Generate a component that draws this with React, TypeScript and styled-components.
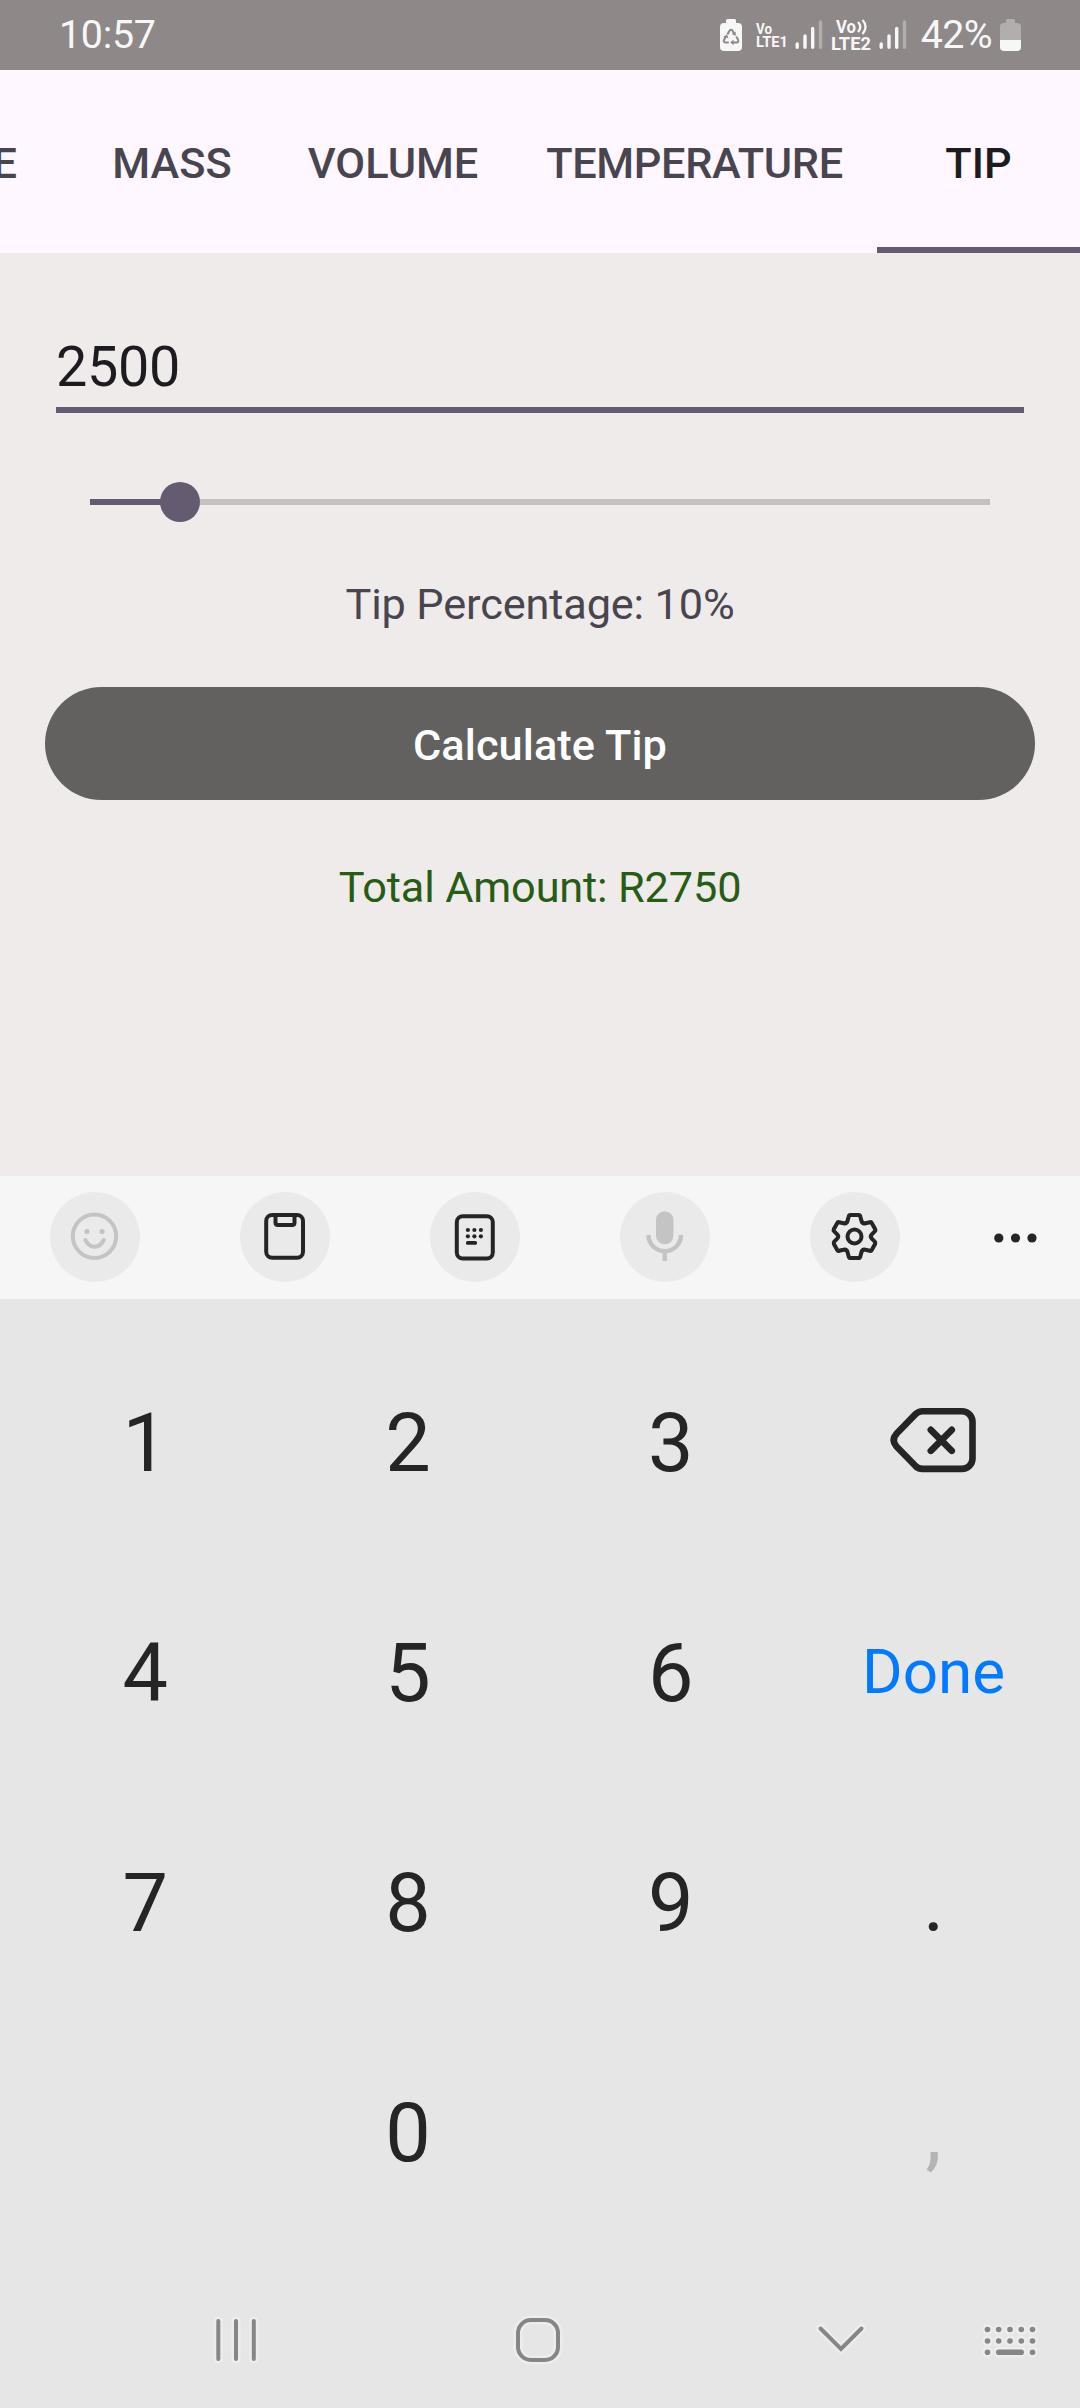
import React, { useState } from "react";
import styled, { createGlobalStyle } from "styled-components";

const GlobalStyle = createGlobalStyle`
  * { box-sizing: border-box; }
  body { margin: 0; background: #efebea; font-family: Roboto, "Noto Sans", sans-serif; }
  button { border: 0; padding: 0; background: none; font-family: inherit; }
  svg { display: block; overflow: visible; }
`;

const Screen = styled.div`
  width: 1080px;
  height: 2408px;
  display: flex;
  flex-direction: column;
  overflow: hidden;
  background: #efebea;
`;

const StatusBar = styled.header`
  height: 70px;
  flex: none;
  display: flex;
  align-items: center;
  justify-content: space-between;
  padding: 0 59px 0 59px;
  background: #8e8889;
  color: #f7f7f7;
`;

const Clock = styled.span`
  font-size: 39.4px;
  line-height: 46px;
  letter-spacing: -0.3px;
`;

const StatusIcons = styled.div`
  display: flex;
  align-items: center;
`;

const BatteryText = styled.span`
  font-size: 39.4px;
  line-height: 46px;
  letter-spacing: -0.6px;
  margin-left: 14px;
  margin-right: 8px;
`;

const Tabs = styled.nav`
  height: 183px;
  flex: none;
  display: flex;
  overflow: hidden;
  background: #fef7ff;
`;

const Tab = styled.button<{ $width: number; $active?: boolean; $spacing?: number }>`
  width: ${(p) => p.$width}px;
  flex: none;
  display: flex;
  justify-content: center;
  align-items: center;
  padding-top: ${(p) => (p.$active ? 9 : 3)}px;
  border-bottom: ${(p) => (p.$active ? "6px solid #645b70" : "0")};
  font-size: 43.3px;
  font-weight: 500;
  letter-spacing: ${(p) => p.$spacing ?? 0}px;
  white-space: nowrap;
  color: ${(p) => (p.$active ? "#1d1b20" : "#49454f")};
`;

const ClippedTab = styled(Tab)`
  justify-content: flex-end;
  padding-right: 57px;
  margin-left: -166px;
`;

const WideTab = styled(Tab)`
  padding-right: 4px;
`;

const Content = styled.main`
  height: 923px;
  flex: none;
  display: flex;
  flex-direction: column;
  align-items: center;
  padding: 76px 45px 0;
`;

const AmountInput = styled.input`
  width: 968px;
  height: 84px;
  border: 0;
  border-bottom: 6px solid #645b70;
  outline: 0;
  padding: 0 0 2px;
  background: transparent;
  color: #1d1b20;
  font: 400 55.7px Roboto, sans-serif;
  letter-spacing: -0.3px;
`;

const Slider = styled.div`
  width: 900px;
  height: 40px;
  margin-top: 69px;
  display: flex;
  align-items: center;
`;

const Track = styled.div<{ $filled?: boolean }>`
  height: 6px;
  background: ${(p) => (p.$filled ? "#645b70" : "#c6c1c1")};
  flex: ${(p) => (p.$filled ? "none" : "1")};
`;

const Thumb = styled.div`
  width: 40px;
  height: 40px;
  margin: 0 -20px;
  border-radius: 50%;
  background: #645b70;
  z-index: 1;
`;

const Line = styled.p<{ $color: string; $top: number }>`
  margin: ${(p) => p.$top}px 0 0;
  font-size: 43.3px;
  line-height: 52px;
  letter-spacing: -0.15px;
  color: ${(p) => p.$color};
`;

const CalculateButton = styled.button`
  width: 990px;
  height: 113px;
  margin-top: 56px;
  padding-top: 4px;
  border-radius: 57px;
  background: #62615f;
  color: #fff;
  font-size: 43.3px;
  font-weight: 500;
  letter-spacing: 0.1px;
`;

const Toolbar = styled.div`
  height: 123px;
  flex: none;
  display: flex;
  align-items: center;
  gap: 100px;
  padding: 0 0 1px 50px;
  background: #f6f6f6;
`;

const ToolButton = styled.button<{ $muted?: boolean }>`
  width: 90px;
  height: 90px;
  flex: none;
  border-radius: 50%;
  background: #eaeaea;
  color: ${(p) => (p.$muted ? "#c4c4c4" : "#252525")};
`;

const MoreButton = styled.button`
  width: 44px;
  height: 90px;
  margin-left: -6.5px;
  color: #252525;
`;

const Keypad = styled.div`
  height: 956px;
  flex: none;
  display: grid;
  grid-template-columns: repeat(4, 262.8px);
  grid-template-rows: repeat(4, 230px);
  padding: 27px 0 0 13.8px;
  background: #e6e6e6;
`;

const Key = styled.button<{ $tone?: "digit" | "action" | "muted" }>`
  display: flex;
  align-items: center;
  justify-content: center;
  padding-top: ${(p) => (p.$tone === "action" ? 0 : 4)}px;
  font-size: ${(p) => (p.$tone === "action" ? 62 : 81)}px;
  color: ${(p) => (p.$tone === "action" ? "#007aff" : p.$tone === "muted" ? "#b4b4b4" : "#252525")};
`;

const BackspaceGlyph = styled.svg`
  margin-bottom: 6px;
`;

const NavBar = styled.footer`
  flex: 1;
  display: flex;
  padding-top: 25px;
  background: #e6e6e6;
`;

const RecycleBattery = () => (
  <svg width="22" height="32" viewBox="0 0 22 32">
    <path fill="#f7f7f7" d="M6 1.5Q6 0 7.5 0h7Q16 0 16 1.5V4h2q4 0 4 4v20q0 4-4 4H4q-4 0-4-4V8q0-4 4-4h2z" />
    <g fill="none" stroke="#8e8889" strokeWidth="2">
      <path d="M7.4 15.4 9.5 11.7q1.5-2 3 0l1.8 3.2" />
      <path d="m16.3 17.5 1.7 3.1q1 2.8-1.5 2.9H12" />
      <path d="M8.8 23.5H5.5q-2.6-.4-1.4-2.8l1.5-3" />
    </g>
    <path fill="#8e8889" d="M15.7 12.5v4.6l-4-2zM13.5 20.6v5.6l-3.2-2.8zM3.4 17.4l3.7-1.8 1.4 3.8z" />
  </svg>
);

const VoLte = ({ sim }: { sim: 1 | 2 }) =>
  sim === 1 ? (
    <svg width="33" height="32" viewBox="0 0 33 32" fill="#f7f7f7" fontFamily="Roboto" fontWeight="700">
      <text x="0" y="14.5" fontSize="15" textLength="16" lengthAdjust="spacingAndGlyphs">Vo</text>
      <text x="0" y="28" fontSize="15.5" textLength="32" lengthAdjust="spacingAndGlyphs">LTE1</text>
    </svg>
  ) : (
    <svg width="42" height="32" viewBox="0 0 42 32" fill="#f7f7f7" fontFamily="Roboto" fontWeight="700">
      <text x="5" y="14" fontSize="18" textLength="20" lengthAdjust="spacingAndGlyphs">Vo</text>
      <path d="M27 3q4.5 4.5 0 10M31.5 1q6 6.5 0 14" fill="none" stroke="#f7f7f7" strokeWidth="2.3" />
      <text x="0" y="31" fontSize="18.5" textLength="40" lengthAdjust="spacingAndGlyphs">LTE2</text>
    </svg>
  );

const Signal = () => (
  <svg width="28" height="32" viewBox="0 0 28 32" strokeWidth="3.4" strokeLinecap="round" stroke="#f7f7f7">
    <path d="M2.2 25v3.3M10 17v11.3M17.7 9.5v18.8" />
    <path d="M25.5 3v25.3" stroke="#b2aeae" />
  </svg>
);

const Battery = () => (
  <svg width="21" height="32" viewBox="0 0 21 32">
    <path fill="#b2aeae" d="M6 1.5Q6 0 7.5 0h6Q15 0 15 1.5V4h2q4 0 4 4v13H0V8q0-4 4-4h2z" />
    <path fill="#f7f7f7" d="M0 21h21v7q0 4-4 4H4q-4 0-4-4z" />
  </svg>
);

const Gap = styled.span<{ $w: number }>`
  width: ${(p) => p.$w}px;
`;

const SmileIcon = () => (
  <svg width="90" height="90" viewBox="0 0 90 90" fill="none" stroke="currentColor" strokeWidth="4">
    <circle cx="44.5" cy="44.3" r="21.7" />
    <path d="M35.3 48q3.5 6.7 9.3 6.7T53.8 48" strokeLinecap="round" />
    <circle cx="37" cy="39.5" r="2.6" fill="currentColor" stroke="none" />
    <circle cx="52" cy="39.5" r="2.6" fill="currentColor" stroke="none" />
  </svg>
);

const ClipboardIcon = () => (
  <svg width="90" height="90" viewBox="0 0 90 90" fill="none" stroke="currentColor" strokeWidth="4">
    <rect x="26.2" y="23" width="36.8" height="42.8" rx="6" />
    <path d="M35.5 23v7.500q0 2.500 2.500 2.500h14q2.500 0 2.500-2.500V23" />
  </svg>
);

const PadIcon = () => (
  <svg width="90" height="90" viewBox="0 0 90 90" fill="currentColor">
    <rect x="26.8" y="24.2" width="36" height="42.4" rx="6" fill="none" stroke="currentColor" strokeWidth="4" />
    {[38, 44.3].map((y) => [37.9, 44.4, 50.9].map((x) => <circle key={`${x}-${y}`} cx={x} cy={y} r="2.1" />))}
    <rect x="36" y="49" width="11" height="3.8" rx="1.6" />
  </svg>
);

const MicIcon = () => (
  <svg width="90" height="90" viewBox="0 0 90 90">
    <rect x="36" y="19.3" width="17.5" height="33" rx="8.75" fill="currentColor" />
    <path d="M28.5 43a16.2 16.2 0 0 0 32.5 0M44.7 59v10" fill="none" stroke="currentColor" strokeWidth="4.4" />
  </svg>
);

const GearIcon = () => (
  <svg width="90" height="90" viewBox="0 0 90 90" fill="none" stroke="currentColor" strokeWidth="4" strokeLinejoin="round">
    <path d="M40.5 23h8q1.5 0 1.8 1.5l1.2 4.5q1 3 4 2.200l4.200-1q1.500-.4 2.200 1l3.300 6q.6 1.200-.4 2.200l-3 3q-2 2.100 0 4.200l3 3q1 1 .4 2.200l-3.300 6q-.7 1.400-2.200 1l-4.200-1q-3-.8-4 2.200l-1.200 4.500q-.3 1.500-1.800 1.500h-8q-1.500 0-1.800-1.500L37.500 60q-1-3-4-2.200l-4.200 1q-1.500.4-2.200-1l-3.300-6q-.6-1.200.4-2.200l3-3q2-2.100 0-4.200l-3-3q-1-1-.4-2.200l3.300-6q.7-1.400 2.200-1l4.200 1q3 .8 4-2.200l1.200-4.500Q39 23 40.500 23z" />
    <circle cx="44.5" cy="44.5" r="7" />
  </svg>
);

const MoreIcon = () => (
  <svg width="44" height="90" viewBox="0 0 44 90" fill="currentColor">
    <circle cx="4.8" cy="46" r="4.6" />
    <circle cx="21.5" cy="46" r="4.6" />
    <circle cx="38" cy="46" r="4.6" />
  </svg>
);

const BackspaceIcon = () => (
  <BackspaceGlyph width="88" height="68" viewBox="0 0 88 68" fill="none" stroke="currentColor" strokeWidth="6.6">
    <path d="M32.5 5.3H72A10.5 10.5 0 0 1 82.5 15.8V52.4A10.5 10.5 0 0 1 72 62.9H32.5Q28 62.9 25.5 60L6.5 40.5Q.8 34.1 6.5 27.7L25.5 8.2Q28.5 5.3 32.5 5.3z" />
    <path d="m40.8 23.8 21 21m0-21-21 21" strokeLinecap="round" />
  </BackspaceGlyph>
);

const NavIcons = () => (
  <svg width="1080" height="128" viewBox="0 0 1080 128" fill="none" strokeLinecap="round">
    {[
      { color: "#ededed", extra: 5 },
      { color: "#868686", extra: 0 },
    ].map(({ color, extra }) => (
      <g key={color} stroke={color}>
        <path d="M218.3 41v38M236 41v38M253.8 41v38" strokeWidth={4 + extra} />
        <rect x="518" y="40" width="40" height="40" rx="13" strokeWidth={4 + extra} />
        <path d="m820.5 48.5 20.5 20.5 20.5-20.5" strokeWidth={4 + extra} />
        {[49.5, 61, 72.3].map((y, row) =>
          [987.5, 998.7, 1010, 1021.3, 1032.5]
            .filter((_, i) => row < 2 || i === 0 || i === 4)
            .map((x) => <circle key={`${x}-${y}`} cx={x} cy={y} r={2.8 + extra / 2} fill={color} stroke="none" />)
        )}
        <path d="M998.8 72.3h22.4" strokeWidth={5.6 + extra} />
      </g>
    ))}
  </svg>
);

export default function App() {
  const [amount, setAmount] = useState("2500");
  const percent = 10;
  const keys = ["1", "2", "3", "back", "4", "5", "6", "Done", "7", "8", "9", ".", "", "0", "", ","];

  return (
    <>
      <GlobalStyle />
      <Screen>
        <StatusBar>
          <Clock>10:57</Clock>
          <StatusIcons>
            <RecycleBattery />
            <Gap $w={14} />
            <VoLte sim={1} />
            <Gap $w={6.5} />
            <Signal />
            <Gap $w={8} />
            <VoLte sim={2} />
            <Gap $w={5.5} />
            <Signal />
            <BatteryText>42%</BatteryText>
            <Battery />
          </StatusIcons>
        </StatusBar>
        <Tabs>
          <ClippedTab $width={240}>DISTANCE</ClippedTab>
          <Tab $width={196}>MASS</Tab>
          <Tab $width={246}>VOLUME</Tab>
          <WideTab $width={361} $spacing={-0.35}>TEMPERATURE</WideTab>
          <Tab $width={203} $active>TIP</Tab>
        </Tabs>
        <Content>
          <AmountInput value={amount} onChange={(e) => setAmount(e.target.value)} />
          <Slider>
            <Track $filled style={{ width: `${percent}%` }} />
            <Thumb />
            <Track />
          </Slider>
          <Line $color="#49454f" $top={57}>Tip Percentage: {percent}%</Line>
          <CalculateButton>Calculate Tip</CalculateButton>
          <Line $color="#265c14" $top={62}>Total Amount: R2750</Line>
        </Content>
        <Toolbar>
          <ToolButton $muted><SmileIcon /></ToolButton>
          <ToolButton><ClipboardIcon /></ToolButton>
          <ToolButton><PadIcon /></ToolButton>
          <ToolButton $muted><MicIcon /></ToolButton>
          <ToolButton><GearIcon /></ToolButton>
          <MoreButton><MoreIcon /></MoreButton>
        </Toolbar>
        <Keypad>
          {keys.map((k, i) => (
            <Key key={i} $tone={k === "Done" ? "action" : k === "," ? "muted" : "digit"}>
              {k === "back" ? <BackspaceIcon /> : k}
            </Key>
          ))}
        </Keypad>
        <NavBar>
          <NavIcons />
        </NavBar>
      </Screen>
    </>
  );
}
